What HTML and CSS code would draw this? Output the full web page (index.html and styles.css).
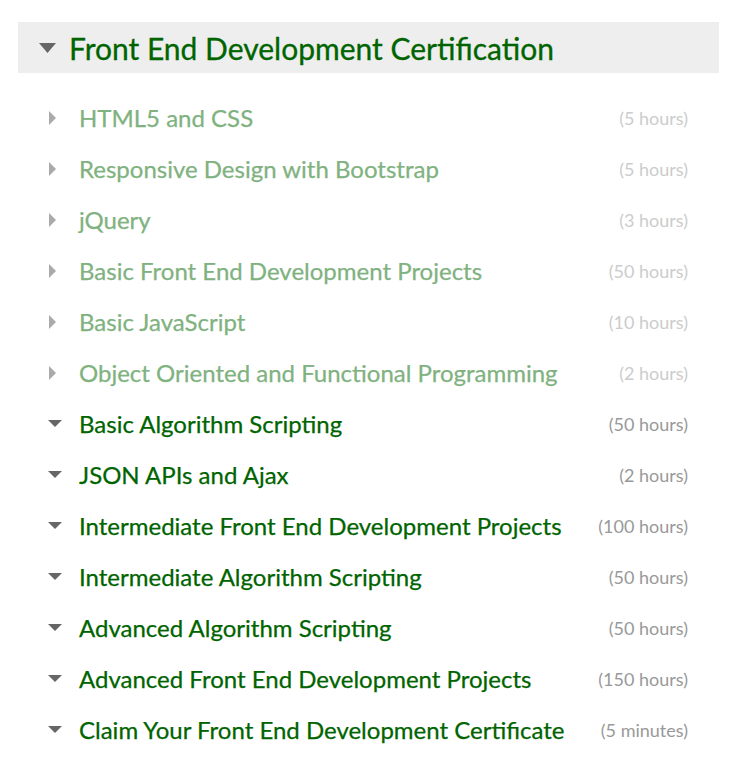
FILE: index.html
```html
<!DOCTYPE html>
<html>
<head>
<meta charset="utf-8">
<link rel="stylesheet" href="styles.css">
</head>
<body>
<div class="wrap">
  <div class="cert-head">
    <svg class="caret-down big" viewBox="0 0 17 10" width="17" height="10"><polygon points="0,0 17,0 8.5,10"/></svg>
    <h2 class="cert-title">Front End Development Certification</h2>
  </div>
  <ul class="blocks">
    <li class="block done"><svg class="caret-right" viewBox="0 0 7 14" width="7" height="14"><polygon points="0,0 7,7 0,14"/></svg><span class="name">HTML5 and CSS</span><span class="time">(5 hours)</span></li>
    <li class="block done"><svg class="caret-right" viewBox="0 0 7 14" width="7" height="14"><polygon points="0,0 7,7 0,14"/></svg><span class="name">Responsive Design with Bootstrap</span><span class="time">(5 hours)</span></li>
    <li class="block done"><svg class="caret-right" viewBox="0 0 7 14" width="7" height="14"><polygon points="0,0 7,7 0,14"/></svg><span class="name">jQuery</span><span class="time">(3 hours)</span></li>
    <li class="block done"><svg class="caret-right" viewBox="0 0 7 14" width="7" height="14"><polygon points="0,0 7,7 0,14"/></svg><span class="name">Basic Front End Development Projects</span><span class="time">(50 hours)</span></li>
    <li class="block done"><svg class="caret-right" viewBox="0 0 7 14" width="7" height="14"><polygon points="0,0 7,7 0,14"/></svg><span class="name">Basic JavaScript</span><span class="time">(10 hours)</span></li>
    <li class="block done"><svg class="caret-right" viewBox="0 0 7 14" width="7" height="14"><polygon points="0,0 7,7 0,14"/></svg><span class="name">Object Oriented and Functional Programming</span><span class="time">(2 hours)</span></li>
    <li class="block"><svg class="caret-down" viewBox="0 0 14 7" width="14" height="7"><polygon points="0,0 14,0 7,7"/></svg><span class="name">Basic Algorithm Scripting</span><span class="time">(50 hours)</span></li>
    <li class="block"><svg class="caret-down" viewBox="0 0 14 7" width="14" height="7"><polygon points="0,0 14,0 7,7"/></svg><span class="name">JSON APIs and Ajax</span><span class="time">(2 hours)</span></li>
    <li class="block"><svg class="caret-down" viewBox="0 0 14 7" width="14" height="7"><polygon points="0,0 14,0 7,7"/></svg><span class="name">Intermediate Front End Development Projects</span><span class="time">(100 hours)</span></li>
    <li class="block"><svg class="caret-down" viewBox="0 0 14 7" width="14" height="7"><polygon points="0,0 14,0 7,7"/></svg><span class="name">Intermediate Algorithm Scripting</span><span class="time">(50 hours)</span></li>
    <li class="block"><svg class="caret-down" viewBox="0 0 14 7" width="14" height="7"><polygon points="0,0 14,0 7,7"/></svg><span class="name">Advanced Algorithm Scripting</span><span class="time">(50 hours)</span></li>
    <li class="block"><svg class="caret-down" viewBox="0 0 14 7" width="14" height="7"><polygon points="0,0 14,0 7,7"/></svg><span class="name">Advanced Front End Development Projects</span><span class="time">(150 hours)</span></li>
    <li class="block"><svg class="caret-down" viewBox="0 0 14 7" width="14" height="7"><polygon points="0,0 14,0 7,7"/></svg><span class="name">Claim Your Front End Development Certificate</span><span class="time">(5 minutes)</span></li>
  </ul>
</div>
</body>
</html>
```

FILE: styles.css
```css
html, body {
  margin: 0;
  padding: 0;
  background: #fff;
  font-family: Lato, "Open Sans", sans-serif;
}
.wrap {
  padding: 22px 17px 0 18px;
}
.cert-head {
  background: #eeeeee;
  height: 51px;
  display: flex;
  align-items: center;
  padding-left: 21px;
}
.cert-head .caret-down {
  fill: #666;
  margin-right: 13px;
  flex: none;
}
.cert-title {
  margin: 0;
  font-size: 30px;
  font-weight: 400;
  color: #006400;
  line-height: 1;
  -webkit-text-stroke: 0.3px #006400;
}
.blocks {
  list-style: none;
  margin: 19px 0 0;
  padding: 0 31px 0 30px;
}
.block {
  height: 51px;
  display: flex;
  align-items: center;
}
.block svg {
  flex: none;
}
.caret-right {
  fill: #aaa;
  margin: 0 23px 0 1px;
}
.block .caret-down {
  fill: #666;
  margin-right: 17px;
}
.name {
  font-size: 24px;
  font-weight: 400;
  color: #006400;
  flex: 1;
  -webkit-text-stroke: 0.25px currentColor;
}
.time {
  font-size: 18px;
  font-weight: 400;
  color: #999;
}
.done .name {
  color: #80b280;
}
.done .time {
  color: #ccc;
}
```
